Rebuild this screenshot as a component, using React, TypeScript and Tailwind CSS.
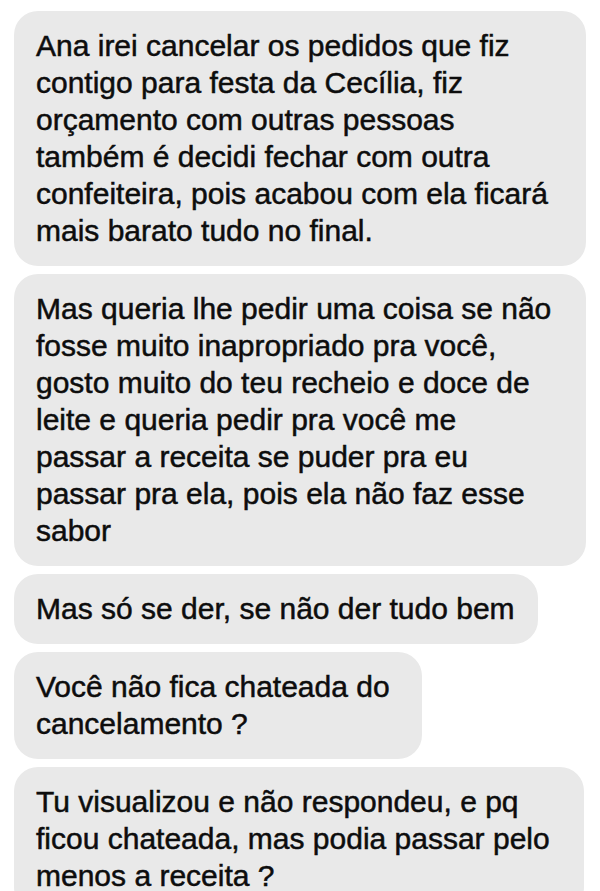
const messages = [
  {
    width: "w-[572px]",
    lines: [
      "Ana irei cancelar os pedidos que fiz",
      "contigo para festa da Cecília, fiz",
      "orçamento com outras pessoas",
      "também é decidi fechar com outra",
      "confeiteira, pois acabou com ela ficará",
      "mais barato tudo no final.",
    ],
  },
  {
    width: "w-[572px]",
    lines: [
      "Mas queria lhe pedir uma coisa se não",
      "fosse muito inapropriado pra você,",
      "gosto muito do teu recheio e doce de",
      "leite e queria pedir pra você me",
      "passar a receita se puder pra eu",
      "passar pra ela, pois ela não faz esse",
      "sabor",
    ],
  },
  {
    width: "w-[524px]",
    lines: ["Mas só se der, se não der tudo bem"],
  },
  {
    width: "w-[408px]",
    lines: ["Você não fica chateada do", "cancelamento ?"],
  },
  {
    width: "w-[570px]",
    lines: [
      "Tu visualizou e não respondeu, e pq",
      "ficou chateada, mas podia passar pelo",
      "menos a receita ?",
    ],
  },
];

function Bubble({ lines, width }: { lines: string[]; width: string }) {
  return (
    <div
      className={`${width} rounded-[24px] bg-[#e9e9e9] pt-[16px] pb-[17px] pl-[22px] pr-4 text-[30px] leading-[37px] text-[#0d0d0d] [-webkit-text-stroke:0.5px_#0d0d0d]`}
    >
      {lines.map((line, i) => (
        <div key={i} className="whitespace-nowrap">
          {line}
        </div>
      ))}
    </div>
  );
}

export default function App() {
  return (
    <div
      className="h-[891px] overflow-hidden bg-white px-[14px] pt-[11px]"
      style={{ fontFamily: '"Liberation Sans", Arial, sans-serif' }}
    >
      <div className="flex flex-col items-start gap-2">
        {messages.map((m, i) => (
          <Bubble key={i} lines={m.lines} width={m.width} />
        ))}
      </div>
    </div>
  );
}
